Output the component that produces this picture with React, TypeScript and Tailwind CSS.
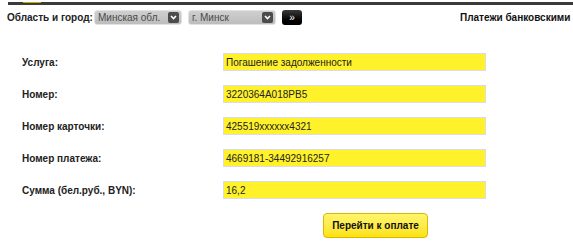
const fields = [
  { label: "Услуга:", value: "Погашение задолженности" },
  { label: "Номер:", value: "3220364A018PB5" },
  { label: "Номер карточки:", value: "425519xxxxxx4321" },
  { label: "Номер платежа:", value: "4669181-34492916257" },
  { label: "Сумма (бел.руб., BYN):", value: "16,2" },
];

const Chevron = () => (
  <span className="flex h-[11px] w-[11px] shrink-0 items-center justify-center rounded-[2px] bg-[#4b4b4b]">
    <svg width="7" height="5" viewBox="0 0 7 5">
      <path d="M1 1 L3.5 3.5 L6 1" stroke="#fff" strokeWidth="1.6" fill="none" />
    </svg>
  </span>
);

const Select = ({ text }: { text: string }) => (
  <div className="flex h-[15px] w-[88px] shrink-0 items-center justify-between rounded-[3px] border border-[#e2e2e2] bg-gradient-to-b from-[#cfcfcf] to-[#bdbdbd] pl-[3px] pr-[2px] text-[10px] leading-none text-[#4a4a4a]">
    <span>{text}</span>
    <Chevron />
  </div>
);

export default function App() {
  return (
    <div className="h-[246px] w-[573px] overflow-hidden bg-white font-['Liberation_Sans',Arial,sans-serif] text-[#1a1a1a]">
      <div className="ml-[8px] mt-[2px] h-[3px] bg-[#3b3b3b]">
        <div className="ml-[15px] h-[1px] w-[18px] bg-[#c9a400]" />
      </div>

      <div className="mt-[5px] flex h-[15px] items-center whitespace-nowrap">
        <span className="ml-[7px] w-[87px] shrink-0 text-[10px] font-bold text-[#222]">Область и город:</span>
        <Select text="Минская обл." />
        <div className="ml-[6px] shrink-0">
          <Select text="г. Минск" />
        </div>
        <button className="ml-[6px] flex h-[15px] w-[20px] shrink-0 items-center justify-center rounded-[3px] bg-gradient-to-b from-[#3a3a3a] to-[#000] text-[10px] leading-none text-white">
          »
        </button>
        <span className="ml-[158px] text-[10px] font-bold text-[#111]">Платежи банковскими</span>
      </div>

      <div className="mt-[28px] flex flex-col gap-[14px] pl-[22px]">
        {fields.map((f, i) => (
          <div key={i} className="flex h-[18px] items-center">
            <span className="w-[201px] text-[10px] font-bold text-[#222]">{f.label}</span>
            <div className="flex h-[18px] w-[263px] items-center border border-[#dcdce8] bg-[#fff22a] pl-[2px] text-[10px] text-[#222]">
              {f.value}
            </div>
          </div>
        ))}
      </div>

      <div className="mt-[13px] pl-[323px]">
        <button className="h-[25px] w-[105px] rounded-[4px] border border-[#d8b800] bg-gradient-to-b from-[#fff56a] to-[#fde200] text-[10px] font-bold text-[#111]">
          Перейти к оплате
        </button>
      </div>
    </div>
  );
}
